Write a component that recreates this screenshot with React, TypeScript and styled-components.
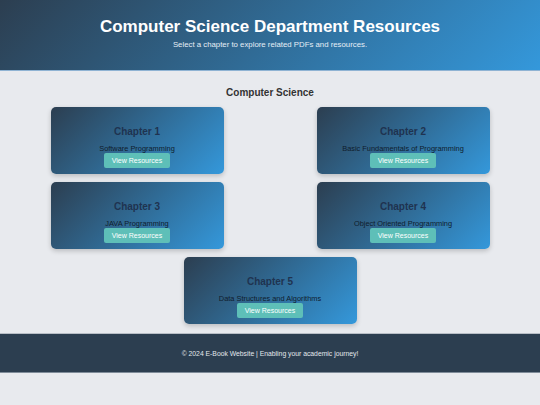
import React from "react";
import styled, { createGlobalStyle } from "styled-components";

interface Chapter {
  id: number;
  title: string;
}

const chapters: Chapter[] = [
  { id: 1, title: "Software Programming" },
  { id: 2, title: "Basic Fundamentals of Programming" },
  { id: 3, title: "JAVA Programming" },
  { id: 4, title: "Object Oriented Programming" },
  { id: 5, title: "Data Structures and Algorithms" },
];

const App: React.FC = () => {
  return (
    <>
      <GlobalStyle />
      <Header>
        <Title>Computer Science Department Resources</Title>
        <Subtitle>Select a chapter to explore related PDFs and resources.</Subtitle>
      </Header>
      <Main>
        <SectionTitle>Computer Science</SectionTitle>
        <Grid>
          {chapters.map((ch) => (
            <Card key={ch.id}>
              <CardTitle>Chapter {ch.id}</CardTitle>
              <CardText>{ch.title}</CardText>
              <Button>View Resources</Button>
            </Card>
          ))}
        </Grid>
      </Main>
      <Footer>© 2024 E-Book Website | Enabling your academic journey!</Footer>
    </>
  );
};

export default App;

const GlobalStyle = createGlobalStyle`
  body {
    margin: 0;
    background: #e8eaee;
    font-family: "Liberation Sans", Arial, sans-serif;
  }
`;

const Header = styled.header`
  height: 71px;
  box-sizing: border-box;
  padding-top: 16px;
  text-align: center;
  color: #fff;
  background: linear-gradient(135deg, #2c3e50, #3498db);
  border-bottom: 1px solid #8fb3d3;
`;

const Title = styled.h1`
  margin: 0;
  font-size: 17px;
  font-weight: bold;
  line-height: 21px;
`;

const Subtitle = styled.p`
  margin: 3px 0 0;
  font-size: 7.8px;
  color: #e6eef6;
`;

const Main = styled.main`
  padding: 16px 0 9px;
`;

const SectionTitle = styled.h2`
  margin: 0 0 8px;
  text-align: center;
  font-size: 10px;
  line-height: 12px;
  font-weight: bold;
  color: #333;
`;

const Grid = styled.div`
  display: flex;
  flex-wrap: wrap;
  justify-content: center;
  column-gap: 93px;
  row-gap: 8px;
  width: 439px;
  margin: 0 auto;
`;

const Card = styled.div`
  width: 173px;
  height: 67px;
  box-sizing: border-box;
  padding-top: 19px;
  border-radius: 5px;
  display: flex;
  flex-direction: column;
  align-items: center;
  background: linear-gradient(135deg, #2c3e50, #3498db);
  box-shadow: 0 2px 5px rgba(0, 0, 0, 0.2);
`;

const CardTitle = styled.h3`
  margin: 0;
  font-size: 10px;
  line-height: 12px;
  font-weight: bold;
  color: #1f3350;
`;

const CardText = styled.p`
  margin: 7px 0 0;
  font-size: 7.4px;
  line-height: 8px;
  color: #0f1c2c;
`;

const Button = styled.button`
  margin-top: 0;
  width: 66px;
  height: 15px;
  padding: 0;
  border: none;
  border-radius: 2px;
  background: #5ebfb8;
  color: #fff;
  font-family: "Liberation Sans", Arial, sans-serif;
  font-size: 7px;
`;

const Footer = styled.footer`
  height: 38px;
  display: flex;
  align-items: center;
  justify-content: center;
  background: #2c3e50;
  color: #e3e7ec;
  font-size: 6.8px;
  border-top: 1px solid #b8bec6;
  border-bottom: 1px solid #7f8c99;
`;
